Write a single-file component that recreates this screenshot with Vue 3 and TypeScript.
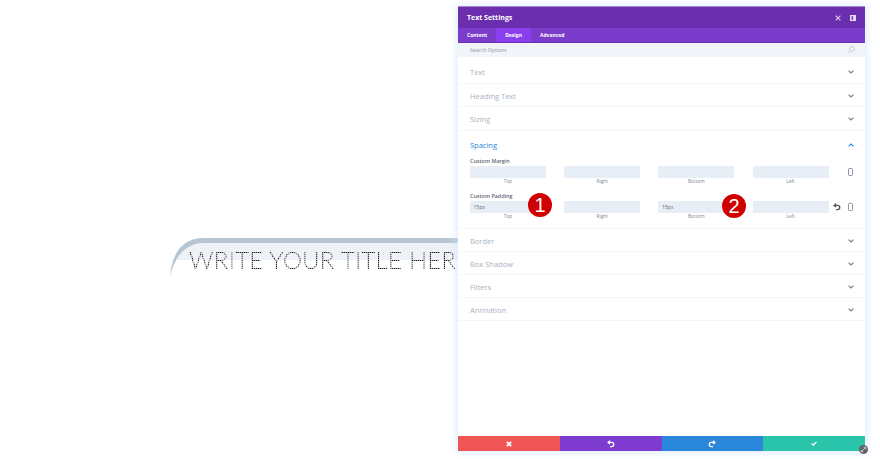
<script setup lang="ts">
const sections = ["Text", "Heading Text", "Sizing"];
const sectionsAfter = ["Border", "Box Shadow", "Filters", "Animation"];
const sides = ["Top", "Right", "Bottom", "Left"];

const spacingRows = [
  { label: "Custom Margin", values: ["", "", "", ""], reset: false },
  { label: "Custom Padding", values: ["15px", "", "15px", ""], reset: true },
];
</script>

<template>
  <div class="page">
    <!-- module preview on the builder canvas -->
    <svg class="preview" width="458" height="300" viewBox="0 0 458 300">
      <defs>
        <pattern id="dots" width="2" height="2" patternUnits="userSpaceOnUse">
          <rect width="1.4" height="1.4" fill="#1c1e20" />
        </pattern>
      </defs>
      <path d="M170 276 C172 258 180 238 204 238 L458 238 L458 260 L176 260 C173 264 171 270 170 276 Z" fill="#eef2f6" />
      <path d="M170 276 C172 256 180 238 204 238 L458 238 L458 243 L204 243 C186 243 175 256 170 276 Z" fill="#b7c4d2" />
      <text x="189" y="268.5" class="dotted" fill="url(#dots)">WRITE YOUR TITLE HERE</text>
    </svg>

    <section class="panel">
      <header class="head">
        <span class="title">Text Settings</span>
        <span class="head-icons">
          <svg width="6" height="6" viewBox="0 0 6 6"><path d="M.6.6l4.8 4.8M5.4.6L.6 5.4" stroke="#d9c4f2" stroke-width="1.2" /></svg>
          <svg width="6" height="6" viewBox="0 0 6 6"><path d="M0 0h6v6H0z" fill="#e8def5" /><path d="M1.6 1.2h1.5v3.6H1.6z" fill="#6b2fae" /></svg>
        </span>
      </header>
      <nav class="tabs">
        <span class="tab">Content</span>
        <span class="tab active">Design</span>
        <span class="tab">Advanced</span>
      </nav>
      <div class="search">
        <span>Search Options</span>
        <svg width="8" height="8" viewBox="0 0 8 8" fill="none" stroke="#c6ccd4" stroke-width="1"><circle cx="5" cy="3" r="2.4" /><path d="M3.2 4.8L.8 7.2" /></svg>
      </div>

      <div v-for="name in sections" :key="name" class="row">
        <span>{{ name }}</span>
        <svg class="chev" width="6" height="4" viewBox="0 0 6 4"><path d="M.6.7L3 3 5.4.7" fill="none" stroke="#6f7a8a" stroke-width="1.1" /></svg>
      </div>

      <div class="spacing">
        <div class="spacing-head">
          <span>Spacing</span>
          <svg class="chev" width="6" height="4" viewBox="0 0 6 4"><path d="M.6 3.3L3 1l2.4 2.3" fill="none" stroke="#2b87da" stroke-width="1.1" /></svg>
        </div>
        <div v-for="item in spacingRows" :key="item.label" class="group">
          <div class="group-label">{{ item.label }}</div>
          <div class="fields">
            <div v-for="(side, i) in sides" :key="side" class="field">
              <div class="input">{{ item.values[i] }}</div>
              <div class="side">{{ side }}</div>
            </div>
            <div class="tools">
              <svg v-if="item.reset" width="8" height="8" viewBox="0 0 8 8" fill="none" stroke="#4f5762" stroke-width="1.4"><path d="M1.6 2.4h3a2 2 0 0 1 0 4.2H3" /><path d="M3 .8L1.2 2.4 3 4" /></svg>
              <svg width="5" height="8" viewBox="0 0 5 8"><rect x=".5" y=".5" width="4" height="7" rx=".8" fill="none" stroke="#8a93a0" stroke-width="1" /></svg>
            </div>
          </div>
        </div>
      </div>

      <div v-for="name in sectionsAfter" :key="name" class="row">
        <span>{{ name }}</span>
        <svg class="chev" width="6" height="4" viewBox="0 0 6 4"><path d="M.6.7L3 3 5.4.7" fill="none" stroke="#6f7a8a" stroke-width="1.1" /></svg>
      </div>

      <div class="spring"></div>

      <footer class="foot">
        <button class="cancel">
          <svg width="6" height="6" viewBox="0 0 6 6"><path d="M.8.8l4.4 4.4M5.2.8L.8 5.2" stroke="#fff" stroke-width="1.7" /></svg>
        </button>
        <button class="undo">
          <svg width="8" height="8" viewBox="0 0 8 8" fill="none" stroke="#fff" stroke-width="1.4"><path d="M1.6 2.4h3a2 2 0 0 1 0 4.2H3" /><path d="M3 .8L1.2 2.4 3 4" /></svg>
        </button>
        <button class="redo">
          <svg width="8" height="8" viewBox="0 0 8 8" fill="none" stroke="#fff" stroke-width="1.4"><path d="M6.4 2.4h-3a2 2 0 0 0 0 4.2H5" /><path d="M5 .8l1.8 1.6L5 4" /></svg>
        </button>
        <button class="save">
          <svg width="6" height="5" viewBox="0 0 6 5"><path d="M.7 2.5l1.7 1.6L5.4 1" fill="none" stroke="#fff" stroke-width="1.3" /></svg>
        </button>
      </footer>

      <span class="badge one">1</span>
      <span class="badge two">2</span>
      <span class="resize">
        <svg width="7" height="7" viewBox="0 0 7 7"><path d="M1.5 5.5l4-4M1.2 3.6v2.2h2.2M3.6 1.2h2.2v2.2" fill="none" stroke="#c9ccd0" stroke-width=".9" /></svg>
      </span>
    </section>
  </div>
</template>

<style scoped>
.page {
  position: relative;
  height: 459px;
  overflow: hidden;
  background: #fff;
  display: flex;
  justify-content: flex-end;
  padding: 7px 15px 0 0;
  box-sizing: border-box;
  font-family: "Open Sans", "Liberation Sans", sans-serif;
}

.preview {
  position: absolute;
  left: 0;
  top: 0;
}

.dotted {
  font-family: Lato, "Open Sans", sans-serif;
  font-size: 24px;
  font-weight: 300;
  letter-spacing: 0.25px;
  filter: grayscale(1);
}

.panel {
  position: relative;
  width: 407px;
  height: 444px;
  background: #fff;
  display: flex;
  flex-direction: column;
  box-shadow: 0 0 8px 2px rgba(214, 232, 252, 0.75);
}

.head {
  height: 21px;
  background: #6a2eae;
  border-top: 1px solid #a98bd0;
  margin-top: -1px;
  display: flex;
  align-items: center;
  justify-content: space-between;
  padding: 0 9px;
  color: #fff;
  font-size: 7px;
  font-weight: 700;
}

.head-icons {
  display: flex;
  align-items: center;
  gap: 9px;
}

.tabs {
  height: 14px;
  background: #7b3bcb;
  border-bottom: 1px solid #6a2eae;
  display: flex;
  color: #fff;
  font-size: 5px;
  font-weight: 700;
}

.tab {
  display: flex;
  align-items: center;
  padding: 0 9px;
}

.tab.active {
  background: #8a3fee;
}

.search {
  height: 14px;
  background: #f1f5f9;
  display: flex;
  align-items: center;
  justify-content: space-between;
  padding: 0 10px 0 12px;
  color: #a3acb9;
  font-size: 5px;
  font-weight: 600;
}

.row {
  height: 23.4px;
  box-sizing: border-box;
  border-bottom: 1px solid #f3f6fa;
  display: flex;
  align-items: center;
  justify-content: space-between;
  padding: 1.5px 11px 0 12px;
  color: #a9b3c3;
  font-size: 7.5px;
}

.search + .row {
  height: 27px;
  padding-top: 4px;
}

.spacing ~ .row {
  height: 23px;
  padding-top: 2.5px;
}

.spacing {
  height: 98px;
  box-sizing: border-box;
  border-bottom: 1px solid #f3f6fa;
  padding: 0 11px 0 12px;
}

.spacing-head {
  height: 27.5px;
  display: flex;
  align-items: center;
  justify-content: space-between;
  color: #2b87da;
  font-size: 7.5px;
}

.group {
  height: 34.5px;
}

.group-label {
  height: 7px;
  line-height: 7px;
  color: #5f6772;
  font-size: 5.4px;
  font-weight: 600;
}

.fields {
  display: flex;
  margin-top: 1px;
}

.field {
  width: 76px;
  margin-right: 18.2px;
}

.input {
  height: 12px;
  line-height: 12px;
  background: #e8eef6;
  color: #5f6772;
  font-size: 5px;
  padding-left: 3.5px;
  box-sizing: border-box;
}

.side {
  text-align: center;
  color: #7e8794;
  font-size: 4.8px;
  line-height: 6px;
}

.tools {
  position: relative;
  flex: 1;
  height: 12px;
  display: flex;
  align-items: center;
  justify-content: flex-end;
  gap: 7px;
  margin-left: -14px;
  padding-right: 1px;
}

.spring {
  flex: 1;
}

.foot {
  display: flex;
  height: 15px;
}

.foot button {
  flex: 1;
  border: 0;
  padding: 0;
  display: flex;
  align-items: center;
  justify-content: center;
}

.cancel {
  background: #ef5555;
}

.undo {
  background: #7e3bd0;
}

.redo {
  background: #2b87da;
}

.save {
  background: #29c4a9;
}

.badge {
  position: absolute;
  width: 24px;
  height: 24px;
  border-radius: 50%;
  background: #cf0000;
  color: #fff;
  font-family: "Liberation Sans", sans-serif;
  font-size: 20px;
  line-height: 24px;
  text-align: center;
}

.badge.one {
  left: 70px;
  top: 185.5px;
}

.badge.two {
  left: 264px;
  top: 187px;
}

.resize {
  position: absolute;
  right: -3px;
  bottom: -3px;
  width: 9px;
  height: 9px;
  border-radius: 50%;
  background: #5f6368;
  display: flex;
  align-items: center;
  justify-content: center;
}
</style>

<style>
html,
body {
  margin: 0;
  background: #fff;
}
</style>
